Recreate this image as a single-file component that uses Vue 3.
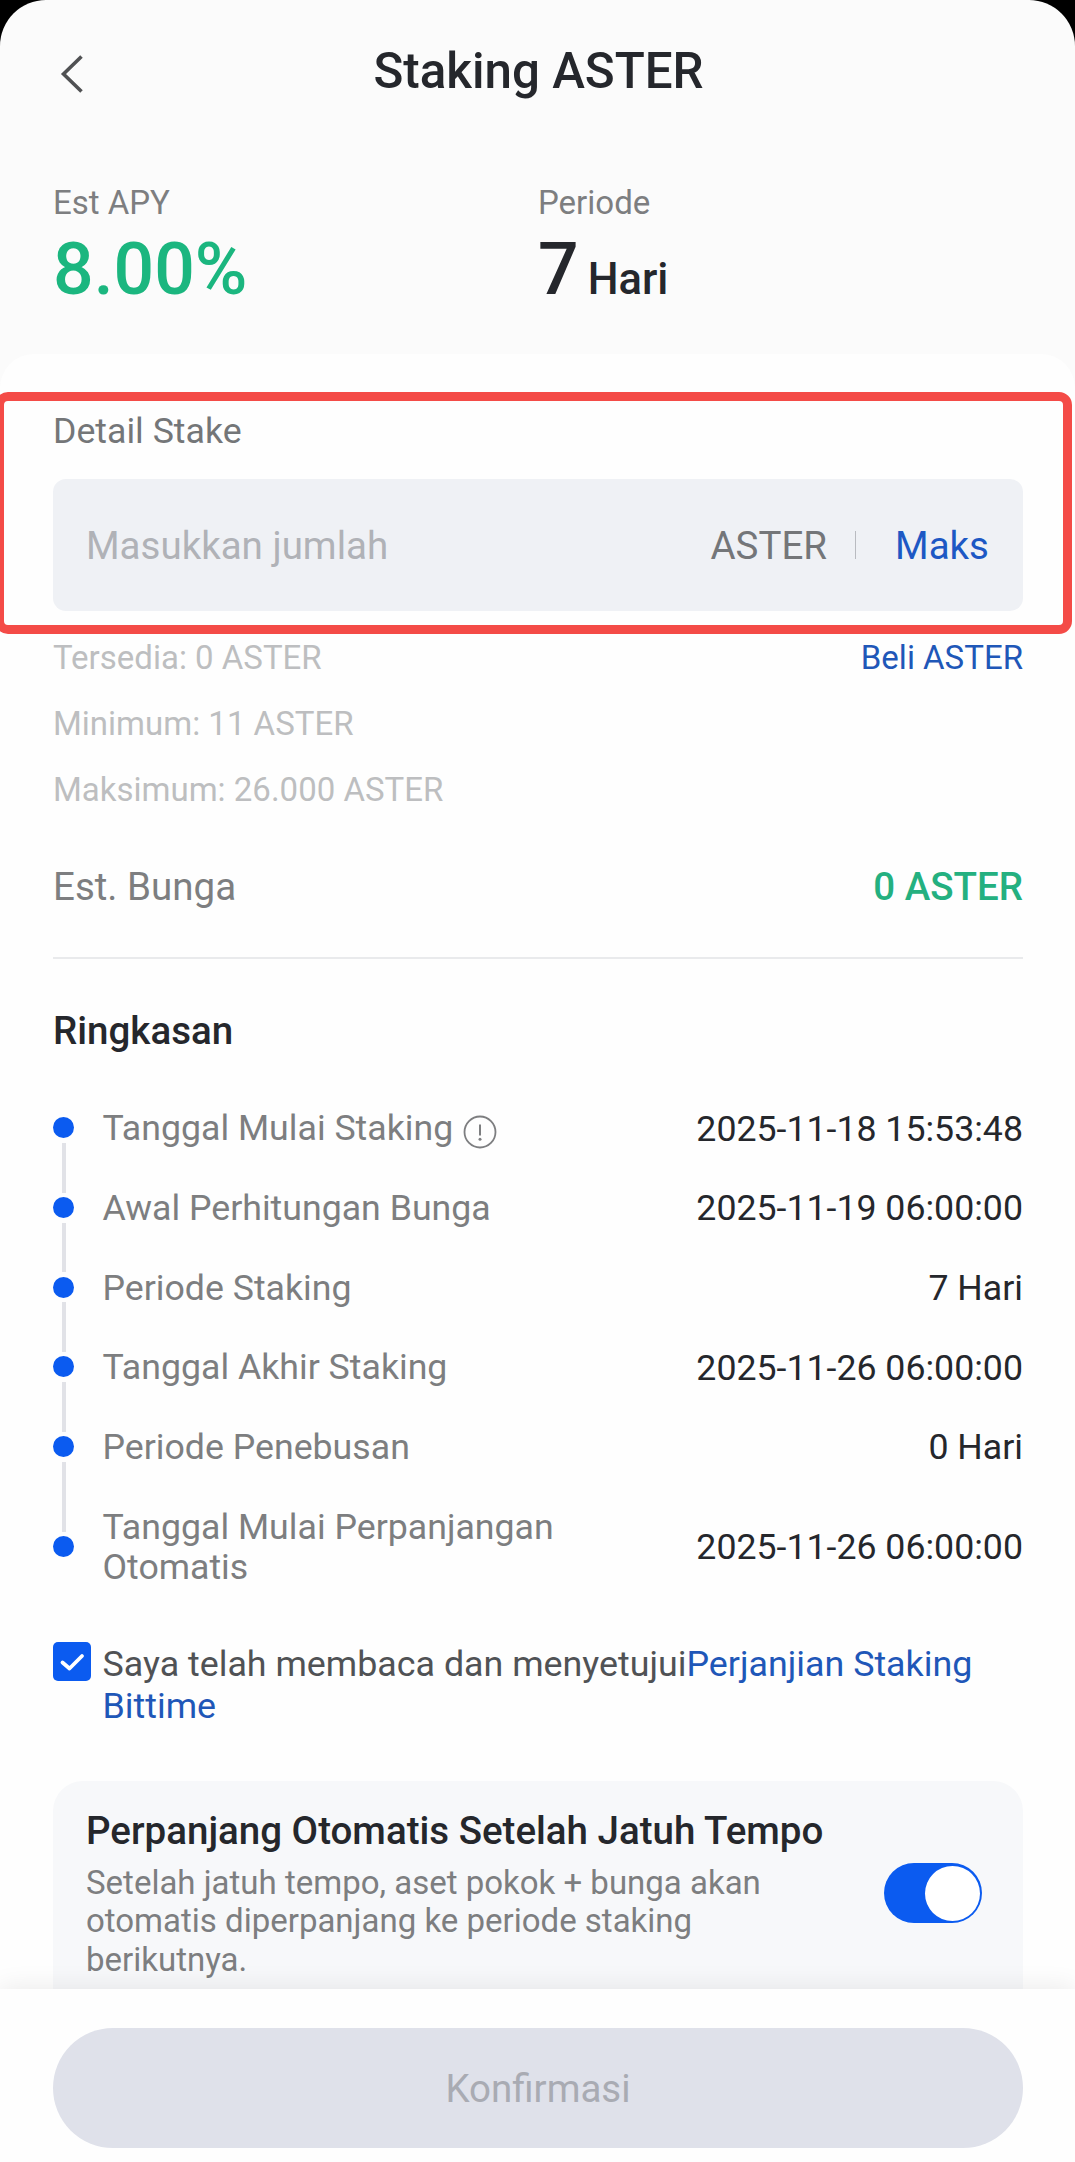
<template>
  <div class="screen">
    <div class="page">
      <header class="nav">
        <svg class="back" viewBox="0 0 24 40" width="24" height="40">
          <path d="M21.5 2.5 L3.5 20 L21.5 37.5" fill="none" stroke="#505153" stroke-width="3.6" />
        </svg>
        <h1 class="title">Staking {{ coin }}</h1>
      </header>

      <div class="stats">
        <div class="stat">
          <span class="stat-label">Est APY</span>
          <span class="stat-value green">8.00%</span>
        </div>
        <div class="stat">
          <span class="stat-label">Periode</span>
          <span class="stat-value">7<small>Hari</small></span>
        </div>
      </div>

      <main class="sheet">
        <section class="stake">
          <div class="stake-label">Detail Stake</div>
          <div class="amount">
            <span class="placeholder">Masukkan jumlah</span>
            <span class="unit">{{ coin }}</span>
            <i class="bar"></i>
            <a class="max">Maks</a>
          </div>
          <div class="highlight"></div>
        </section>

        <div class="limits">
          <div class="limit"><span>Tersedia: 0 {{ coin }}</span><a>Beli {{ coin }}</a></div>
          <div class="limit">Minimum: 11 {{ coin }}</div>
          <div class="limit">Maksimum: 26.000 {{ coin }}</div>
        </div>

        <div class="interest">
          <span>Est. Bunga</span>
          <b>0 {{ coin }}</b>
        </div>

        <h2 class="subtitle">Ringkasan</h2>
        <ul class="timeline">
          <li v-for="item in summary" :key="item.label" class="step">
            <div class="marker"><i class="line"></i><i class="dot"></i><i class="line"></i></div>
            <div class="step-label">
              <span>{{ item.label }}</span>
              <svg v-if="item.info" class="info" viewBox="0 0 34 34" width="34" height="34">
                <circle cx="17" cy="17" r="15.5" fill="none" stroke="#7d7e80" stroke-width="1.8" />
                <path d="M17 9.5 V20.5" stroke="#7d7e80" stroke-width="2" />
                <circle cx="17" cy="24.2" r="1.5" fill="#7d7e80" />
              </svg>
            </div>
            <div class="step-value">{{ item.value }}</div>
          </li>
        </ul>

        <div class="agreement" @click="agreed = !agreed">
          <span class="checkbox" :class="{ on: agreed }">
            <svg v-if="agreed" viewBox="0 0 38 39" width="38" height="39">
              <path d="M9.5 20.5 L16.5 26.5 L29 14" fill="none" stroke="#fff" stroke-width="3.8" stroke-linecap="round" stroke-linejoin="round" />
            </svg>
          </span>
          <p>Saya telah membaca dan menyetujui<a>Perjanjian Staking Bittime</a></p>
        </div>

        <div class="renew">
          <div class="renew-text">
            <h3>Perpanjang Otomatis Setelah Jatuh Tempo</h3>
            <p>Setelah jatuh tempo, aset pokok + bunga akan otomatis diperpanjang ke periode staking berikutnya.</p>
          </div>
          <div class="switch" :class="{ on: autoRenew }" @click="autoRenew = !autoRenew"><i></i></div>
        </div>
      </main>
    </div>

    <footer class="footer">
      <button class="confirm" disabled>Konfirmasi</button>
    </footer>
  </div>
</template>

<script setup>
import { ref } from 'vue'

const coin = 'ASTER'
const agreed = ref(true)
const autoRenew = ref(true)

const summary = [
  { label: 'Tanggal Mulai Staking', value: '2025-11-18 15:53:48', info: true },
  { label: 'Awal Perhitungan Bunga', value: '2025-11-19 06:00:00' },
  { label: 'Periode Staking', value: '7 Hari' },
  { label: 'Tanggal Akhir Staking', value: '2025-11-26 06:00:00' },
  { label: 'Periode Penebusan', value: '0 Hari' },
  { label: 'Tanggal Mulai Perpanjangan Otomatis', value: '2025-11-26 06:00:00' }
]
</script>

<style>
body {
  margin: 0;
  background: #000;
}
</style>

<style scoped>
.screen {
  display: flex;
  flex-direction: column;
  height: 2162px;
  overflow: hidden;
  border-radius: 46px 46px 0 0;
  background: #fbfbfb;
  color: #25272c;
  font-family: Roboto, 'Liberation Sans', sans-serif;
}

h1,
h2,
h3,
p,
ul {
  margin: 0;
  padding: 0;
}

h1,
h2,
h3 {
  font-weight: 500;
}

a {
  color: #1f57b8;
}

.page {
  flex: 1;
  min-height: 0;
  overflow: hidden;
}

.nav {
  display: grid;
  grid-template-columns: 1fr auto 1fr;
  height: 141px;
  padding: 41px 58px 0 60px;
  box-sizing: border-box;
}

.back {
  margin-top: 13px;
}

.title {
  font-size: 49.3px;
  line-height: 60px;
}

.stats {
  display: grid;
  grid-template-columns: 485px 1fr;
  height: 213px;
  padding: 42px 53px 0;
  box-sizing: border-box;
}

.stat {
  display: flex;
  flex-direction: column;
}

.stat-label {
  margin-bottom: 7px;
  color: #7d7e80;
  font-size: 33px;
  line-height: 40px;
}

.stat-value {
  font-size: 71.5px;
  font-weight: 500;
  line-height: 80px;
}

.stat-value small {
  margin-left: 9px;
  font-size: 43.5px;
}

.green {
  color: #1bb67f;
}

.sheet {
  padding: 57px 52px 0 53px;
  border-radius: 34px 34px 0 0;
  background: #fefefe;
}

.stake {
  position: relative;
}

.stake-label {
  color: #747678;
  font-size: 35.7px;
  line-height: 40px;
}

.amount {
  display: flex;
  align-items: center;
  height: 132px;
  margin-top: 28px;
  padding: 0 34px 0 33px;
  box-sizing: border-box;
  border-radius: 13px;
  background: #eff1f5;
  font-size: 38.5px;
}

.placeholder {
  flex: 1;
  color: #b0b2b7;
}

.unit {
  color: #747679;
}

.bar {
  width: 1px;
  height: 28px;
  margin: 0 39px 0 28px;
  background: #b9bbc0;
}

.max {
  color: #1d58c4;
}

/* callout frame around the amount field */
.highlight {
  position: absolute;
  top: -19px;
  right: -49px;
  bottom: -23px;
  left: -58px;
  box-sizing: border-box;
  border: 9px solid #f44b47;
  border-radius: 13px;
}

.limits {
  margin-top: 14px;
  color: #bdbec0;
  font-size: 33px;
  line-height: 66px;
}

.limit {
  display: flex;
  justify-content: space-between;
}

.interest {
  display: flex;
  justify-content: space-between;
  margin-top: 34px;
  padding-bottom: 40px;
  border-bottom: 2px solid #e9eaec;
  color: #7d7e80;
  font-size: 38.5px;
  line-height: 60px;
}

.interest b {
  color: #24b080;
  font-weight: 500;
}

.subtitle {
  margin: 47px 0 32px;
  font-size: 38.5px;
  line-height: 50px;
}

.timeline {
  list-style: none;
}

.step {
  display: flex;
  align-items: center;
  font-size: 35.7px;
  line-height: 40.5px;
}

.marker {
  display: flex;
  flex-direction: column;
  align-items: center;
  align-self: stretch;
  width: 21px;
  margin-right: 28.5px;
}

.dot {
  width: 21px;
  height: 21px;
  margin: 4.5px 0;
  border-radius: 50%;
  background: #0b5bf0;
}

.line {
  flex: 1;
  width: 4px;
  background: #e1e2e7;
}

.step:first-child .line:first-child,
.step:last-child .line:last-child {
  visibility: hidden;
}

.step-label {
  display: flex;
  flex: 1;
  max-width: 480px;
  padding: 20.3px 0 18.9px;
  color: #7d7e80;
}

.info {
  flex: none;
  margin: 7px 0 -1px 10px;
}

.step-value {
  margin-left: auto;
  padding-top: 2px;
}

.agreement {
  display: flex;
  margin-top: 35px;
  color: #505255;
  font-size: 35.8px;
  line-height: 42px;
}

.agreement p {
  padding-top: 1px;
}

.checkbox {
  flex: none;
  width: 38px;
  height: 39px;
  margin-right: 11.5px;
  border-radius: 5px;
  background: #dfe1ea;
}

.checkbox svg {
  display: block;
}

.checkbox.on {
  background: #0b5bf0;
}

.renew {
  display: flex;
  align-items: center;
  justify-content: space-between;
  margin-top: 54px;
  padding: 25px 41px 40px 33px;
  border-radius: 30px;
  background: #f7f8fa;
}

.renew-text h3 {
  font-size: 38.5px;
  line-height: 50px;
  white-space: nowrap;
}

.renew-text p {
  width: 700px;
  margin-top: 8px;
  color: #7d7e80;
  font-size: 33px;
  line-height: 38.6px;
}

.switch {
  display: flex;
  width: 98px;
  height: 60px;
  margin-top: 1px;
  padding: 2.5px;
  box-sizing: border-box;
  border-radius: 30px;
  background: #dfe1ea;
}

.switch i {
  width: 55px;
  height: 55px;
  border-radius: 50%;
  background: #fff;
}

.switch.on {
  justify-content: flex-end;
  background: #0b5bf0;
}

.footer {
  z-index: 1;
  height: 173px;
  padding: 39px 52px 0 53px;
  box-sizing: border-box;
  background: #fefefe;
  box-shadow: 0 -2px 24px rgba(0, 0, 0, 0.08);
}

.confirm {
  display: block;
  width: 100%;
  height: 120px;
  padding: 0;
  border: 0;
  border-radius: 60px;
  background: #dfe1ea;
  color: #a9abb3;
  font-family: inherit;
  font-size: 38.5px;
}
</style>
